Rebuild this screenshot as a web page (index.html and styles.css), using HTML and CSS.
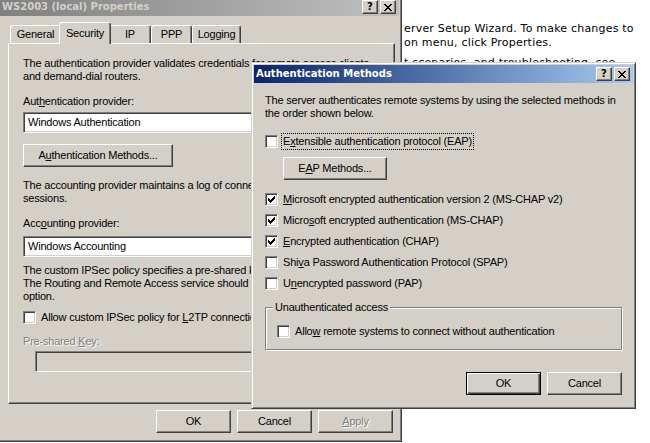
FILE: index.html
```html
<!DOCTYPE html>
<html lang="en">
<head>
  <meta charset="UTF-8">
  <title>Authentication Methods</title>
  <link rel="stylesheet" href="styles.css">
</head>
<body>
  <!-- help page behind the dialogs -->
  <div class="doc">
    <p>erver Setup Wizard. To make changes to<br>on menu, click Properties.</p>
    <p>t scenarios, and troubleshooting, see</p>
  </div>

  <!-- server properties sheet (inactive) -->
  <div class="window props">
    <div class="caption inactive">
      <span class="caption-title">WS2003 (local) Properties</span>
      <div class="caption-btns">
        <span class="cap-btn">?</span>
        <span class="cap-btn">
          <svg width="8" height="7" viewBox="0 0 8 7"><path d="M0 0h2v1H0zM6 0h2v1H6zM1 1h2v1H1zM5 1h2v1H5zM2 2h4v1H2zM3 3h2v1H3zM2 4h4v1H2zM1 5h2v1H1zM5 5h2v1H5zM0 6h2v1H0zM6 6h2v1H6z"/></svg>
        </span>
      </div>
    </div>
    <div class="props-body">
      <div class="tabs">
        <div class="tab tab-general">General</div>
        <div class="tab tab-security selected">Security</div>
        <div class="tab tab-ip">IP</div>
        <div class="tab tab-ppp">PPP</div>
        <div class="tab tab-logging">Logging</div>
      </div>
      <div class="tab-panel">
        <p class="txt">The authentication provider validates credentials for remote access clients<br>and demand-dial routers.</p>
        <div class="lbl lbl-auth">Aut<u>h</u>entication provider:</div>
        <div class="field field-auth">Windows Authentication</div>
        <button class="btn btn-methods">A<u>u</u>thentication Methods...</button>
        <p class="txt txt-acct">The accounting provider maintains a log of connection requests and<br>sessions.</p>
        <div class="lbl lbl-acct">Acc<u>o</u>unting provider:</div>
        <div class="field field-acct">Windows Accounting</div>
        <p class="txt txt-ipsec">The custom IPSec policy specifies a pre-shared key for L2TP connections.<br>The Routing and Remote Access service should be started to set this<br>option.</p>
        <div class="check check-ipsec">
          <span class="box"></span>
          <span>Allow custom IPSec policy for <u>L</u>2TP connection</span>
        </div>
        <div class="lbl lbl-key disabled">Pre-shared <u>K</u>ey:</div>
        <div class="field field-key"></div>
      </div>
      <div class="dlg-buttons">
        <button class="btn">OK</button>
        <button class="btn">Cancel</button>
        <button class="btn disabled"><u>A</u>pply</button>
      </div>
    </div>
  </div>

  <!-- authentication methods dialog (active) -->
  <div class="window auth">
    <div class="caption active">
      <span class="caption-title">Authentication Methods</span>
      <div class="caption-btns">
        <span class="cap-btn">?</span>
        <span class="cap-btn">
          <svg width="8" height="7" viewBox="0 0 8 7"><path d="M0 0h2v1H0zM6 0h2v1H6zM1 1h2v1H1zM5 1h2v1H5zM2 2h4v1H2zM3 3h2v1H3zM2 4h4v1H2zM1 5h2v1H1zM5 5h2v1H5zM0 6h2v1H0zM6 6h2v1H6z"/></svg>
        </span>
      </div>
    </div>
    <div class="auth-body">
      <p class="txt">The server authenticates remote systems by using the selected methods in<br>the order shown below.</p>

      <div class="check check-eap">
        <span class="box"></span>
        <span class="focus">E<u>x</u>tensible authentication protocol (EAP)</span>
      </div>
      <button class="btn btn-eap">E<u>A</u>P Methods...</button>

      <div class="check check-first">
        <span class="box"><svg width="7" height="7" viewBox="0 0 7 7"><path d="M0 2h1v3H0zM1 3h1v3H1zM2 4h1v3H2zM3 3h1v3H3zM4 2h1v3H4zM5 1h1v3H5zM6 0h1v3H6z"/></svg></span>
        <span><u>M</u>icrosoft encrypted authentication version 2 (MS-CHAP v2)</span>
      </div>
      <div class="check">
        <span class="box"><svg width="7" height="7" viewBox="0 0 7 7"><path d="M0 2h1v3H0zM1 3h1v3H1zM2 4h1v3H2zM3 3h1v3H3zM4 2h1v3H4zM5 1h1v3H5zM6 0h1v3H6z"/></svg></span>
        <span>Micro<u>s</u>oft encrypted authentication (MS-CHAP)</span>
      </div>
      <div class="check">
        <span class="box"><svg width="7" height="7" viewBox="0 0 7 7"><path d="M0 2h1v3H0zM1 3h1v3H1zM2 4h1v3H2zM3 3h1v3H3zM4 2h1v3H4zM5 1h1v3H5zM6 0h1v3H6z"/></svg></span>
        <span><u>E</u>ncrypted authentication (CHAP)</span>
      </div>
      <div class="check">
        <span class="box"></span>
        <span>Shi<u>v</u>a Password Authentication Protocol (SPAP)</span>
      </div>
      <div class="check">
        <span class="box"></span>
        <span>U<u>n</u>encrypted password (PAP)</span>
      </div>

      <div class="group">
        <span class="group-label">Unauthenticated access</span>
        <div class="check">
          <span class="box"></span>
          <span>Allo<u>w</u> remote systems to connect without authentication</span>
        </div>
      </div>

      <div class="dlg-buttons auth-buttons">
        <button class="btn default">OK</button>
        <button class="btn">Cancel</button>
      </div>
    </div>
  </div>
</body>
</html>
```

FILE: styles.css
```css
* {
  box-sizing: border-box;
}
body {
  margin: 0;
  width: 650px;
  height: 443px;
  overflow: hidden;
  position: relative;
  background: #fff;
  color: #000;
  font: 11px/13px "Liberation Sans", Arial, sans-serif;
  letter-spacing: -0.2px;
}
u {
  text-decoration-thickness: 1px;
}

/* page text behind the windows */
.doc {
  position: absolute;
  left: 404px;
  top: 22px;
  font: 11px/14px "DejaVu Sans", Verdana, sans-serif;
  letter-spacing: 0.2px;
  white-space: nowrap;
}
.doc p {
  margin: 0 0 6px;
}

/* classic window frame */
.window {
  position: absolute;
  display: flex;
  flex-direction: column;
  background: #d4d0c8;
  border: 1px solid;
  border-color: #d4d0c8 #404040 #404040 #d4d0c8;
  box-shadow: inset 1px 1px #fff, inset -1px -1px #808080;
  padding: 2px;
}
.props {
  left: -3px;
  top: -5px;
  width: 405px;
  height: 447px;
}
.auth {
  left: 251px;
  top: 62px;
  width: 385px;
  height: 347px;
}

.caption {
  flex: none;
  height: 18px;
  display: flex;
  align-items: center;
  justify-content: space-between;
  padding: 0 3px 0 2px;
  font: bold 10px/12px "DejaVu Sans", Verdana, sans-serif;
  letter-spacing: 0;
}
.caption.active {
  background: linear-gradient(to right, #0a246a, #a6caf0);
  color: #fff;
}
.caption.inactive {
  background: linear-gradient(to right, #808080, #c0c0c0);
  color: #d4d0c8;
}
.caption-btns {
  display: flex;
  gap: 2px;
}
.cap-btn {
  width: 16px;
  height: 14px;
  display: flex;
  align-items: center;
  justify-content: center;
  background: #d4d0c8;
  color: #000;
  border: 1px solid;
  border-color: #fff #404040 #404040 #fff;
  box-shadow: inset -1px -1px #808080;
  font: bold 10px/12px "DejaVu Sans", Verdana, sans-serif;
}

/* push buttons */
.btn {
  display: block;
  width: 75px;
  height: 23px;
  padding: 0;
  font: inherit;
  letter-spacing: inherit;
  color: #000;
  background: #d4d0c8;
  border: 1px solid;
  border-color: #fff #404040 #404040 #fff;
  box-shadow: inset -1px -1px #808080;
}
.btn.default {
  border-color: #000;
  box-shadow: inset 1px 1px #fff, inset -1px -1px #404040, inset -2px -2px #808080;
}
.disabled {
  color: #808080;
  text-shadow: 1px 1px #fff;
}
.dlg-buttons {
  display: flex;
  justify-content: flex-end;
  gap: 6px;
  margin-top: 6px;
  padding-right: 2px;
}

/* property sheet */
.props-body {
  padding: 6px 4px 0 8px;
}
.tabs {
  display: flex;
  align-items: flex-end;
  height: 21px;
  padding-left: 2px;
  position: relative;
  z-index: 1;
}
.tab {
  height: 18px;
  background: #d4d0c8;
  border: 1px solid;
  border-bottom: none;
  border-color: #fff #404040 #404040 #fff;
  box-shadow: inset -1px 0 #808080;
  border-radius: 3px 3px 0 0;
  text-align: center;
  line-height: 16px;
}
.tab.selected {
  height: 22px;
  margin: 0 -2px -1px;
  line-height: 20px;
  position: relative;
  z-index: 2;
}
.tab-general { width: 51px; }
.tab-security { width: 52px; }
.tab-ip { width: 42px; }
.tab-ppp { width: 41px; }
.tab-logging { width: 49px; }

.tab-panel {
  height: 361px;
  border: 1px solid;
  border-color: #fff #404040 #404040 #fff;
  box-shadow: inset -1px -1px #808080;
  padding: 13px 0 0 14px;
  overflow: hidden;
  white-space: nowrap;
}

.txt {
  margin: 0;
}
.lbl-auth { margin-top: 12px; }
.field-auth { margin-top: 4px; }
.btn.btn-methods { margin-top: 11px; width: 150px; }
.txt-acct { margin-top: 12px; }
.lbl-acct { margin-top: 12px; }
.field-acct { margin-top: 6px; }
.txt-ipsec { margin-top: 7px; }
.check-ipsec { margin-top: 13px; }
.lbl-key { margin-top: 11px; }

.field {
  width: 360px;
  height: 21px;
  padding: 0 4px;
  line-height: 19px;
  background: #fff;
  border: 1px solid;
  border-color: #808080 #fff #fff #808080;
  box-shadow: inset 1px 1px #404040, inset -1px -1px #d4d0c8;
}
.field.field-key {
  margin: 3px 0 0 12px;
  background: #d4d0c8;
}

/* check boxes */
.check {
  display: flex;
  align-items: center;
  gap: 5px;
  height: 13px;
  margin-top: 8px;
}
.box {
  flex: none;
  width: 13px;
  height: 13px;
  display: flex;
  align-items: center;
  justify-content: center;
  background: #fff;
  border: 1px solid;
  border-color: #808080 #fff #fff #808080;
  box-shadow: inset 1px 1px #404040, inset -1px -1px #d4d0c8;
}
.focus {
  outline: 1px dotted #000;
  outline-offset: 1px;
}

/* authentication methods dialog */
.auth-body {
  padding: 11px 11px 0;
}
.check-eap { margin-top: 15px; }
.btn.btn-eap {
  width: 104px;
  margin: 9px 0 0 18px;
}
.check-first { margin-top: 13px; }

.group {
  position: relative;
  margin-top: 17px;
  padding: 17px 11px 11px;
  border: 1px solid #808080;
  box-shadow: inset 1px 1px #fff, 1px 1px #fff;
}
.group .check {
  margin-top: 0;
}
.group-label {
  position: absolute;
  top: -7px;
  left: 7px;
  padding: 0 2px;
  background: #d4d0c8;
}
.auth-buttons {
  margin-top: 22px;
  padding-right: 0;
}
```
